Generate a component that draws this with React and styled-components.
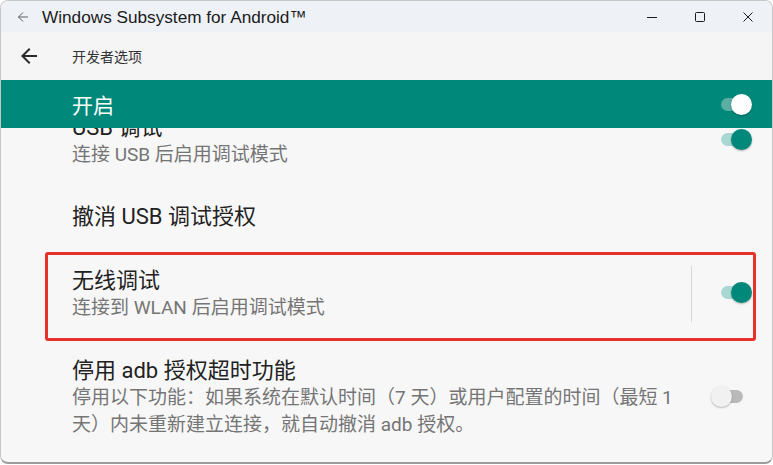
import React from "react";
import styled, { createGlobalStyle } from "styled-components";

const GlobalStyle = createGlobalStyle`
  html, body {
    margin: 0;
    padding: 0;
    background: #ffffff;
  }
  * {
    box-sizing: border-box;
  }
`;

const Window = styled.div`
  width: 773px;
  height: 464px;
  display: flex;
  flex-direction: column;
  background: #f7f7f7;
  border: 1px solid #c6c6c6;
  border-bottom: 2px solid #9c9c9c;
  border-radius: 8px;
  overflow: hidden;
  font-family: Roboto, "Noto Sans CJK SC", sans-serif;
`;

const TitleBar = styled.div`
  height: 31px;
  display: flex;
  align-items: center;
  background: #eef2f7;
  flex-shrink: 0;
`;

const TitleBack = styled.div`
  width: 41px;
  display: flex;
  justify-content: center;
  padding-left: 2px;
  color: #5c5c5c;
`;

const WindowTitle = styled.div`
  flex: 1;
  font-family: "Liberation Sans", Arial, sans-serif;
  font-size: 17.2px;
  color: #1b1b1b;
  padding-top: 1px;
`;

const Controls = styled.div`
  display: flex;
  align-items: center;
  height: 100%;
`;

const ControlButton = styled.div`
  width: 48px;
  height: 100%;
  display: flex;
  align-items: center;
  justify-content: center;
  color: #1b1b1b;
`;

const ActionBar = styled.div`
  height: 48px;
  display: flex;
  align-items: center;
  background: #f5f5f6;
  flex-shrink: 0;
`;

const NavButton = styled.div`
  width: 71px;
  display: flex;
  align-items: center;
  padding-left: 16px;
  color: #2b2b2b;
`;

const ActionTitle = styled.div`
  font-size: 14px;
  color: #333333;
`;

const MasterBar = styled.div`
  height: 48px;
  flex-shrink: 0;
  display: flex;
  align-items: center;
  background: #00897b;
  padding-left: 71px;
`;

const MasterLabel = styled.div`
  flex: 1;
  font-size: 21px;
  color: #ffffff;
  padding-bottom: 1px;
`;

const Scroller = styled.div`
  flex: 1;
  overflow: hidden;
`;

const List = styled.div`
  margin-top: -31px;
  display: flex;
  flex-direction: column;
`;

const Row = styled.div`
  position: relative;
  display: flex;
  align-items: center;
  padding: 18px 0 18px 71px;
`;

const TextBlock = styled.div`
  flex: 1;
  min-width: 0;
`;

const Title = styled.div`
  font-size: 22px;
  line-height: 26px;
  color: #212121;
  white-space: nowrap;
`;

const Summary = styled.div`
  font-size: 19px;
  line-height: 27px;
  color: #757575;
  white-space: nowrap;
`;

const Divider = styled.div`
  width: 1px;
  height: 56px;
  background: #d6d6d6;
`;

const WidgetFrame = styled.div`
  width: 80px;
  display: flex;
  justify-content: center;
  margin-top: ${(p) => p.$shift || 0}px;
`;

const Switch = styled.div`
  position: relative;
  width: 42px;
  height: 21px;
`;

const Track = styled.div`
  position: absolute;
  left: 10px;
  right: 10px;
  top: 4px;
  height: 13px;
  border-radius: 7px;
  background: ${(p) =>
    p.$inverse ? "#5aaea3" : p.$on ? "#a9d8d2" : "#bababa"};
`;

const Thumb = styled.div`
  position: absolute;
  top: 0;
  left: ${(p) => (p.$on ? 20 : 0)}px;
  width: 21px;
  height: 21px;
  border-radius: 50%;
  background: ${(p) => (p.$inverse ? "#ffffff" : p.$on ? "#00897b" : "#f1f1f1")};
  box-shadow: 0 1px 2px rgba(0, 0, 0, 0.28);
`;

const Highlight = styled.div`
  position: absolute;
  top: 4px;
  bottom: -1px;
  left: 44px;
  right: 16px;
  border: 3px solid #e6322b;
  border-radius: 3px;
  pointer-events: none;
`;

const Toggle = ({ on, inverse }) => (
  <Switch>
    <Track $on={on} $inverse={inverse} />
    <Thumb $on={on} $inverse={inverse} />
  </Switch>
);

const SmallArrow = () => (
  <svg width="12" height="12" viewBox="0 0 12 12" fill="none">
    <path d="M11 6H1.5M6 1.5L1.5 6L6 10.5" stroke="currentColor" strokeWidth="1" />
  </svg>
);

const BackArrow = () => (
  <svg width="24" height="24" viewBox="0 0 24 24" fill="currentColor">
    <path d="M20 11H7.83l5.59-5.59L12 4l-8 8 8 8 1.41-1.41L7.83 13H20v-2z" />
  </svg>
);

const MinimizeIcon = () => (
  <svg width="10" height="10" viewBox="0 0 10 10">
    <path d="M0 5.5H10" stroke="currentColor" strokeWidth="1" />
  </svg>
);

const MaximizeIcon = () => (
  <svg width="10" height="10" viewBox="0 0 10 10" fill="none">
    <rect x="0.5" y="0.5" width="9" height="9" rx="1" stroke="currentColor" strokeWidth="1" />
  </svg>
);

const CloseIcon = () => (
  <svg width="10" height="10" viewBox="0 0 10 10">
    <path d="M0.5 0.5L9.5 9.5M9.5 0.5L0.5 9.5" stroke="currentColor" strokeWidth="1" />
  </svg>
);

export default function App() {
  return (
    <>
      <GlobalStyle />
      <Window>
        <TitleBar>
          <TitleBack>
            <SmallArrow />
          </TitleBack>
          <WindowTitle>Windows Subsystem for Android™</WindowTitle>
          <Controls>
            <ControlButton>
              <MinimizeIcon />
            </ControlButton>
            <ControlButton>
              <MaximizeIcon />
            </ControlButton>
            <ControlButton>
              <CloseIcon />
            </ControlButton>
          </Controls>
        </TitleBar>

        <ActionBar>
          <NavButton>
            <BackArrow />
          </NavButton>
          <ActionTitle>开发者选项</ActionTitle>
        </ActionBar>

        <MasterBar>
          <MasterLabel>开启</MasterLabel>
          <WidgetFrame>
            <Toggle on inverse />
          </WidgetFrame>
        </MasterBar>

        <Scroller>
          <List>
            <Row>
              <TextBlock>
                <Title>USB 调试</Title>
                <Summary>连接 USB 后启用调试模式</Summary>
              </TextBlock>
              <WidgetFrame $shift={-4}>
                <Toggle on />
              </WidgetFrame>
            </Row>

            <Row>
              <TextBlock>
                <Title>撤消 USB 调试授权</Title>
              </TextBlock>
            </Row>

            <Row>
              <TextBlock>
                <Title>无线调试</Title>
                <Summary>连接到 WLAN 后启用调试模式</Summary>
              </TextBlock>
              <Divider />
              <WidgetFrame $shift={-4}>
                <Toggle on />
              </WidgetFrame>
              <Highlight />
            </Row>

            <Row>
              <TextBlock>
                <Title>停用 adb 授权超时功能</Title>
                <Summary>
                  停用以下功能：如果系统在默认时间（7 天）或用户配置的时间（最短 1
                  <br />
                  天）内未重新建立连接，就自动撤消 adb 授权。
                </Summary>
              </TextBlock>
              <WidgetFrame $shift={-3}>
                <Toggle />
              </WidgetFrame>
            </Row>
          </List>
        </Scroller>
      </Window>
    </>
  );
}
